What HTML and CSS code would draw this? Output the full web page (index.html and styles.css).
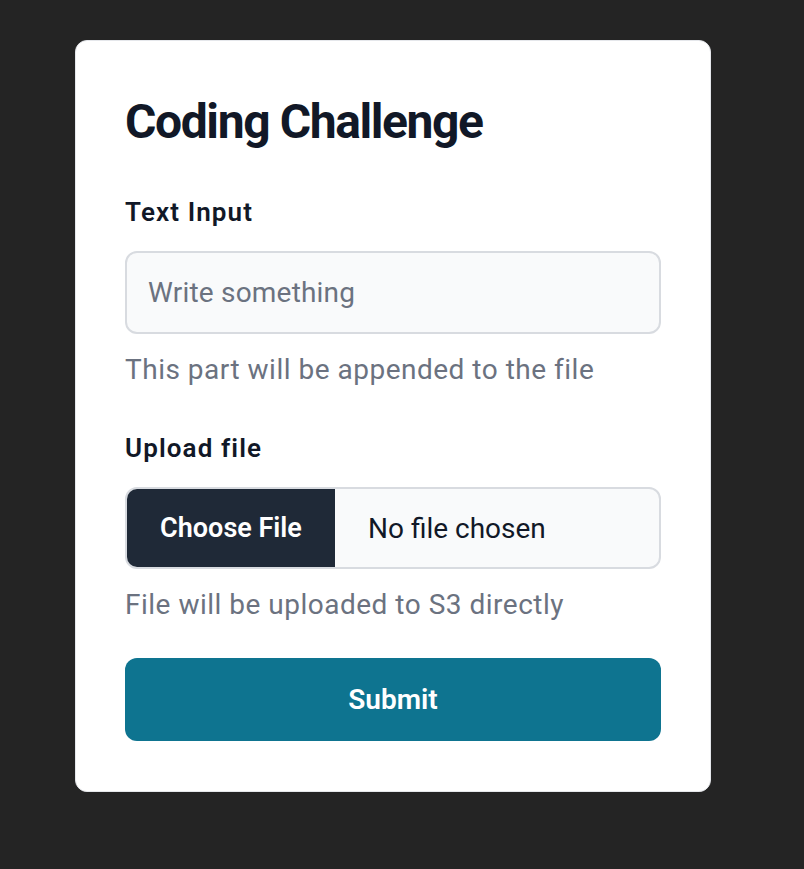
FILE: index.html
```html
<!DOCTYPE html>
<html lang="en">
<head>
<meta charset="utf-8">
<title>Coding Challenge</title>
<link rel="stylesheet" href="styles.css">
</head>
<body>
  <main class="card">
    <h1 class="title">Coding Challenge</h1>
    <form class="form" onsubmit="return false">
      <div class="field">
        <label class="label" for="text">Text Input</label>
        <input class="text-input" id="text" type="text" placeholder="Write something">
        <p class="help">This part will be appended to the file</p>
      </div>
      <div class="field">
        <span class="label">Upload file</span>
        <label class="file-field">
          <input class="file-hidden" type="file">
          <span class="file-btn">Choose File</span>
          <span class="file-name">No file chosen</span>
        </label>
        <p class="help">File will be uploaded to S3 directly</p>
      </div>
      <button class="submit" type="submit">Submit</button>
    </form>
  </main>
</body>
</html>
```

FILE: styles.css
```css
* { box-sizing: border-box; }

html, body {
  margin: 0;
  background: #242424;
}

body {
  padding: 40px 0 0 75px;
  font-family: Roboto, "Noto Sans", sans-serif;
  color: #111827;
}

.card {
  width: 636px;
  background: #ffffff;
  border: 1px solid #e5e7eb;
  border-radius: 12px;
  padding: 48px 49px 50px;
}

.title {
  margin: 0 0 39px;
  font-size: 48px;
  line-height: 66px;
  font-weight: 700;
  letter-spacing: -1.4px;
  color: #111827;
}

.form {
  display: flex;
  flex-direction: column;
}

.field {
  display: flex;
  flex-direction: column;
  margin-bottom: 33px;
}

.field + .field {
  margin-top: 7px;
}

.label {
  display: block;
  font-size: 26px;
  line-height: 36px;
  font-weight: 600;
  letter-spacing: 1.1px;
  color: #111827;
  margin-bottom: 21px;
}

.text-input {
  width: 100%;
  height: 83px;
  padding: 0 21px;
  font-family: inherit;
  font-size: 28px;
  letter-spacing: 0.2px;
  color: #111827;
  background: #f9fafb;
  border: 2px solid #d8dbe0;
  border-radius: 12px;
  outline: none;
}

.text-input::placeholder {
  color: #6b7280;
}

.help {
  margin: 16px 0 0;
  font-size: 28px;
  line-height: 40px;
  letter-spacing: 0.5px;
  color: #6b7280;
}

.file-field {
  display: flex;
  height: 82px;
  background: #f9fafb;
  border: 2px solid #d8dbe0;
  border-radius: 12px;
  overflow: hidden;
  cursor: pointer;
}

.file-hidden {
  display: none;
}

.file-btn {
  display: flex;
  align-items: center;
  justify-content: center;
  width: 208px;
  background: #1f2937;
  color: #ffffff;
  font-size: 27px;
  font-weight: 600;
}

.file-name {
  display: flex;
  align-items: center;
  padding-left: 33px;
  font-size: 28px;
  color: #111827;
}

.submit {
  height: 83px;
  width: 100%;
  border: none;
  border-radius: 12px;
  background: #0e7490;
  color: #ffffff;
  font-family: inherit;
  font-size: 28px;
  font-weight: 600;
  cursor: pointer;
}
```
